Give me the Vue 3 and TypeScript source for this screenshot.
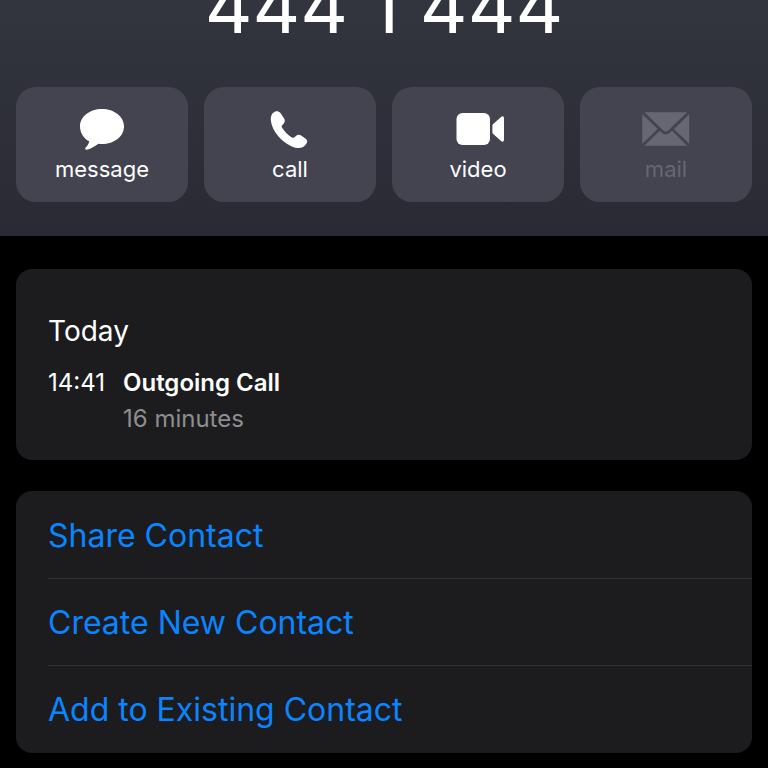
<script setup lang="ts">
import { ref } from 'vue'

type IconName = 'message' | 'call' | 'video' | 'mail'

interface QuickAction {
  name: IconName
  disabled: boolean
}

interface CallEntry {
  time: string
  kind: string
  duration: string
}

const phoneNumber = ref('444 1 444')

const quickActions: QuickAction[] = [
  { name: 'message', disabled: false },
  { name: 'call', disabled: false },
  { name: 'video', disabled: false },
  { name: 'mail', disabled: true },
]

const calls = ref<CallEntry[]>([
  { time: '14:41', kind: 'Outgoing Call', duration: '16 minutes' },
])

const contactActions: string[] = ['Share Contact', 'Create New Contact', 'Add to Existing Contact']
</script>

<template>
  <main class="page">
    <header class="hero">
      <h1 class="number">{{ phoneNumber }}</h1>
      <div class="quick">
        <button
          v-for="action in quickActions"
          :key="action.name"
          type="button"
          class="tile"
          :disabled="action.disabled"
        >
          <svg class="icon" viewBox="0 0 52 48" aria-hidden="true">
            <path
              v-if="action.name === 'message'"
              d="M26 4C38.2 4 48 11.6 48 21.4S38.2 39 26 39c-1.200 0-2.400 0-3.500-.2C18.500 41.500 14.200 44.200 10.800 44.800c-1.500.2-2.200-1.100-1.100-2.200 1.700-1.600 3-3.800 3.600-6.300C7.600 33.200 4 27.800 4 21.400 4 11.600 13.800 4 26 4Z"
            />
            <path
              v-else-if="action.name === 'call'"
              d="M10.800 6.700c2-.9 4.200-.4 5.700 1.400l3.300 5c1.500 2.200 1.300 3.900-.2 5.600l-1.400 1.500c-.7.8-.7 1.500-.2 2.400 2.600 4.200 5.900 7.500 9.900 9.900.9.500 1.700.5 2.500-.2l1.500-1.400c1.700-1.500 3.500-1.600 5.600-.2l4.200 3c1.700 1.400 1.900 3 .8 4.800-2.100 3.300-5.300 4.900-9 4.500C22 41.500 8.200 27.900 6.900 15.700c-.4-3.900.5-7.200 3.900-9Z"
            />
            <g v-else-if="action.name === 'video'">
              <rect x="4.500" y="8" width="33.500" height="32" rx="6" />
              <path d="M41.500 18.700 48.800 12.200c1.700-1.500 3.200-1 3.200 1.200v21.200c0 2.200-1.500 2.700-3.200 1.200L41.500 29.300c-.8-.7-1.100-1.400-1.100-2.400v-5.800c0-1 .3-1.700 1.100-2.400Z" />
            </g>
            <g v-else>
              <path d="M4.500 7.200H47L28.200 25.500c-1.700 1.500-3.200 1.500-4.900 0Z" />
              <path d="M2.300 9.300 17.700 23.900 2.300 38.700Z" />
              <path d="M49.200 9.300 34 23.900 49.200 38.700Z" />
              <path d="M4.300 40.700 19.700 25.800l2.200 2c2.600 2.300 5.200 2.300 7.900 0l2.200-2L47.200 40.700Z" />
            </g>
          </svg>
          <span class="label">{{ action.name }}</span>
        </button>
      </div>
    </header>

    <section class="card history">
      <h2 class="day">Today</h2>
      <div v-for="call in calls" :key="call.time" class="entry">
        <time class="time">{{ call.time }}</time>
        <div class="details">
          <strong class="kind">{{ call.kind }}</strong>
          <span class="duration">{{ call.duration }}</span>
        </div>
      </div>
    </section>

    <section class="card actions">
      <button v-for="label in contactActions" :key="label" type="button" class="row">
        {{ label }}
      </button>
    </section>
  </main>
</template>

<style>
body {
  margin: 0;
  background: #000;
}
</style>

<style scoped>
.page {
  font-family: Inter, 'Liberation Sans', sans-serif;
  color: #fff;
  min-height: 100vh;
  box-sizing: border-box;
  overflow: hidden;
  padding-bottom: 15px;
}

.hero {
  padding: 0 16px 34px;
  background: linear-gradient(#353740, #292a33);
}

/* The number is partly scrolled past the top edge. */
.number {
  margin: -38px 0 0;
  padding-bottom: 37px;
  font-size: 74px;
  line-height: 88px;
  font-weight: 400;
  text-align: center;
  white-space: nowrap;
}

.quick {
  display: grid;
  grid-template-columns: repeat(4, 1fr);
  gap: 16px;
}

.tile {
  display: flex;
  flex-direction: column;
  align-items: center;
  padding: 18px 0 16px;
  border: 0;
  border-radius: 20px;
  background: #434450;
  color: #fff;
  font: inherit;
}

.tile:disabled {
  color: #666772;
}

.icon {
  width: 52px;
  height: 48px;
  fill: currentColor;
}

.label {
  font-size: 22px;
  line-height: 33px;
}

.card {
  margin: 0 16px;
  border-radius: 16px;
  background: #1c1c1e;
}

.history {
  margin-top: 33px;
  padding: 44px 32px 23px;
}

.day {
  margin: 0 0 16px;
  font-size: 28px;
  line-height: 36px;
  font-weight: 400;
}

.entry {
  display: flex;
  gap: 18px;
  font-size: 24px;
  line-height: 36px;
}

.details {
  display: flex;
  flex-direction: column;
}

.kind {
  font-weight: 600;
}

.duration {
  color: #8d8d92;
}

.actions {
  margin-top: 31px;
  padding: 0 0 1px 32px;
}

.row {
  display: block;
  width: 100%;
  padding: 24px 0 22px;
  border: 0;
  border-top: 1px solid transparent;
  background: none;
  color: #0a84ff;
  font: inherit;
  font-size: 32px;
  line-height: 40px;
  text-align: left;
}

.row + .row {
  border-top-color: #303033;
}
</style>
